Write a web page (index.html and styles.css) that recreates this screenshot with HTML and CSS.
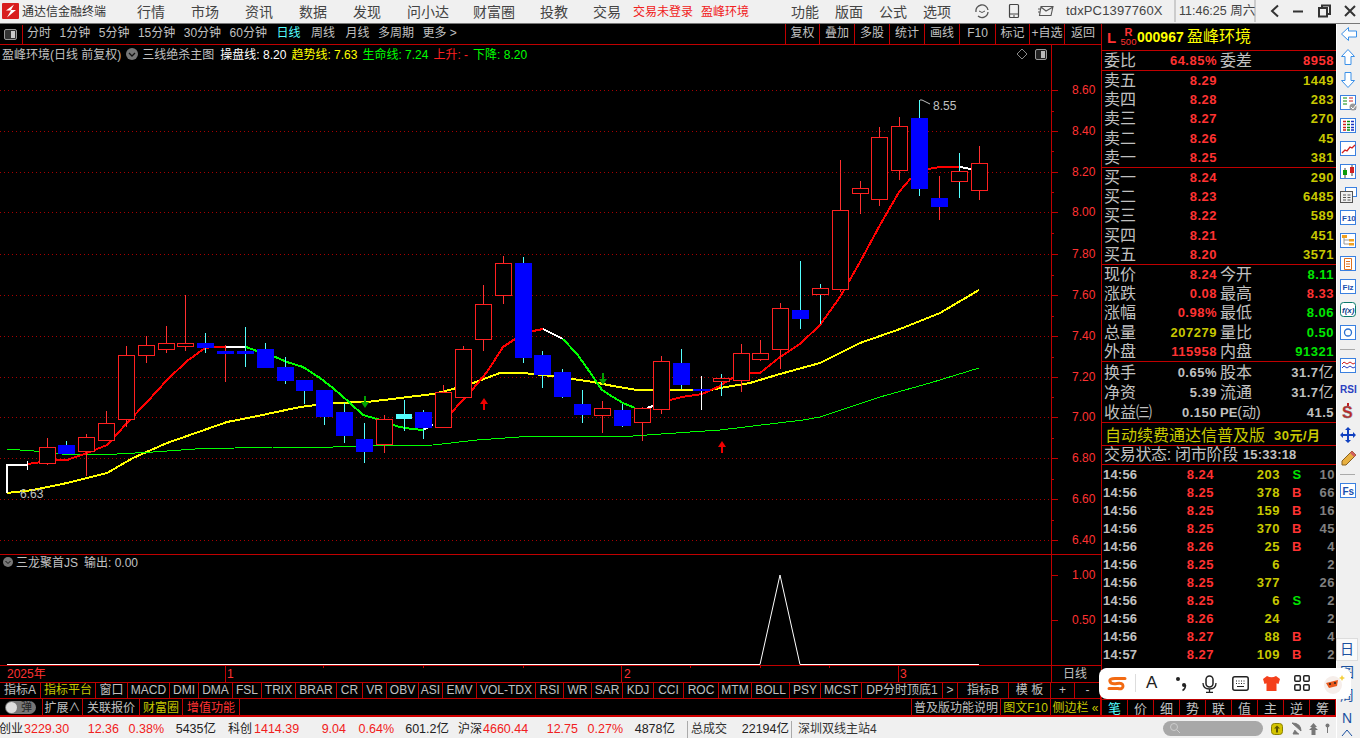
FILE: index.html
```html
<!DOCTYPE html>
<html lang="zh">
<head>
<meta charset="utf-8">
<title>通达信金融终端</title>
<link rel="stylesheet" href="styles.css">
</head>
<body>
<header class="titlebar">
  <svg class="logo" width="17" height="16" viewBox="0 0 17 16"><rect width="17" height="16" rx="1" fill="#d81e1e"/><path d="M12 1.500 4 7.500h5L5 14.500 14 7H9z" fill="#fff"/></svg>
  <span class="appname">通达信金融终端</span>
  <nav class="menu">
    <span>行情</span><span>市场</span><span>资讯</span><span>数据</span><span>发现</span><span>问小达</span><span class="m-wide">财富圈</span><span class="m-wide">投教</span><span>交易</span>
  </nav>
  <span class="alert a1">交易未登录</span><span class="alert a2">盈峰环境</span>
  <nav class="menu menu2"><span>功能</span><span>版面</span><span>公式</span><span>选项</span></nav>
  <svg class="ti t1" width="16" height="16" viewBox="0 0 16 16"><path d="M2 9A6 6 0 0 1 14 7M14 9A6 6 0 0 1 4 13" fill="none" stroke="#555" stroke-width="1.300"/><path d="M5 8q3 3 6 0" fill="none" stroke="#555"/></svg>
  <svg class="ti t2" width="12" height="16" viewBox="0 0 12 16"><rect x="1.500" y="1.500" width="9" height="13" rx="1" fill="none" stroke="#444" stroke-width="1.200"/><path d="M2 11h8M5 13h2" stroke="#444"/></svg>
  <svg class="ti t3" width="16" height="12" viewBox="0 0 16 12"><path d="M3 1.500h12l-2 9H1.500zM3 2l5 4 7-4M0 4h3M0 7h2" fill="none" stroke="#555" stroke-width="1.100"/></svg>
  <span class="uid">tdxPC1397760X</span>
  <span class="clock">11:46:25 周六</span>
  <span class="winbtns">
    <svg width="10" height="14" viewBox="0 0 10 14"><path d="M8 1.500 2 7l6 5.500" fill="none" stroke="#333" stroke-width="2"/></svg>
    <svg width="10" height="14" viewBox="0 0 10 14"><path d="M0 7.500h10" stroke="#333" stroke-width="2"/></svg>
    <svg width="13" height="14" viewBox="0 0 13 14"><path d="M1 4h8v8.500H1zM4 4V1.500h8V10H9" fill="none" stroke="#333" stroke-width="2"/></svg>
    <svg width="12" height="14" viewBox="0 0 12 14"><path d="M1 2l10 10M11 2 1 12" stroke="#333" stroke-width="2"/></svg>
  </span>
</header>

<div class="shell">
  <div class="workspace">
    <main class="terminal">
      <section class="left">
        <div class="toolbar">
          <svg class="panel-ic" width="13" height="11" viewBox="0 0 13 11"><rect x=".5" y=".5" width="12" height="10" rx="1.500" fill="#333" stroke="#999"/><rect x="7" y="2" width="4" height="7" fill="#ccc"/></svg>
          <div class="periods">
            <span>分时</span><span>1分钟</span><span>5分钟</span><span>15分钟</span><span>30分钟</span><span>60分钟</span><span class="cur">日线</span><span>周线</span><span>月线</span><span>多周期</span><span>更多 &gt;</span>
          </div>
          <div class="toolbtns">
            <span>复权</span><span>叠加</span><span>多股</span><span>统计</span><span>画线</span><span>F10</span><span>标记</span><span>+自选</span><span>返回</span>
          </div>
        </div>

        <div class="chart">
          <div class="legend">
            <span class="gray">盈峰环境(日线 前复权)</span>
            <svg class="chev" width="12" height="12" viewBox="0 0 12 12"><circle cx="6" cy="6" r="6" fill="#777"/><path d="M3 5l3 3 3-3" fill="none" stroke="#111" stroke-width="1.300"/></svg>
            <span class="gray l-name">三线绝杀主图</span>
            <span class="white">操盘线: 8.20</span>
            <span class="yellow">趋势线: 7.63</span>
            <span class="green">生命线: 7.24</span>
            <span class="red">上升: -</span>
            <span class="green">下降: 8.20</span>
          </div>
          <div class="legend legend2">
            <svg class="chev2" width="10" height="10" viewBox="0 0 10 10"><circle cx="5" cy="5" r="5" fill="#777"/><path d="M2.500 4l2.500 2.500L7.500 4" fill="none" stroke="#111"/></svg>
            <span class="gray">三龙聚首JS</span>
            <span class="gray">输出: 0.00</span>
          </div>
          <svg class="plot" width="1101" height="637" viewBox="0 45 1101 637">
            <path class="grid" d="M0 90.500H1051M0 131.500H1051M0 172.500H1051M0 212.500H1051M0 254.500H1051M0 295.500H1051M0 336.500H1051M0 377.500H1051M0 417.500H1051M0 458.500H1051M0 499.500H1051M0 540.500H1051"/>
            <path class="frame" d="M1051.500 45V698M0 554.500H1101M0 665.500H1101M1051 90.500h7M1051 131.500h7M1051 172.500h7M1051 212.500h7M1051 254.500h7M1051 295.500h7M1051 336.500h7M1051 377.500h7M1051 417.500h7M1051 458.500h7M1051 499.500h7M1051 540.500h7M1051 111.500h3M1051 151.500h3M1051 192.500h3M1051 233.500h3M1051 275.500h3M1051 316.500h3M1051 357.500h3M1051 397.500h3M1051 438.500h3M1051 479.500h3M1051 520.500h3M1051 575.500h7M1051 620.500h7M225.500 666v16M621.500 666v16M898.500 666v16M323.500 665v3M423.500 665v3M523.500 665v3M690.500 665v3M760.500 665v3M829.500 665v3"/>

            <polyline class="ln yel" points="7,493 33,490 67,483 107,473 133,458 167,443 187,436 227,422 253,417 300,407 333,403 367,402 400,398 433,394 453,389 473,383 500,373 523,373 543,375 573,379 593,382 613,386 637,390 710,390 720,388 750,383 780,374 820,363 860,343 900,329 940,313 979,290"/>
            <polyline class="ln thin" points="7,449 47,452 62,454 117,454 153,452 195,449 235,448 273,447 333,447 373,446 433,445 477,440 533,436 633,436 690,432 720,430 803,420 820,417 880,397 930,383 979,368"/>
            <path class="ln wht" d="M7 493V465H27M226 347H246M423 430L433 425M543 329L563 339M647 408L653 406M960 167L971 169"/>
            <polyline class="ln rd" points="27,464 57,460 67,460 87,453 107,445 127,423 147,402 167,380 187,361 205,348 214,347 226,347"/>
            <polyline class="ln grn" points="246,347 257,351 273,356 287,362 303,367 320,378 333,388 350,403 363,415 377,419 393,425 400,427 412,429 423,430"/>
            <polyline class="ln rd" points="451,413 472,390 487,372 503,347 515,339 533,331 543,329"/>
            <polyline class="ln grn" points="563,339 577,354 587,368 602,390 613,397 623,403 635,408"/>
            <polyline class="ln rd" points="670,400 682,397 702,394 720,386 730,379 750,373 760,373 780,357 800,344 820,325 840,297 860,262 880,225 899,192 911,178"/>
            <polyline class="ln rd" points="928,169 940,167 960,167"/>

            <path class="wick-r" d="M47.500 438V465M86.500 434V476M106.500 411V440M126.500 346V427M146.500 336V363M166.500 326V353M185.500 295V351M225.500 345V382M384.500 415V453M443.500 385V392M463.500 346V349M483.500 285V351M503.500 256V304M602.500 401V433M642.500 407V441M661.500 356V414M741.500 344V392M760.500 340V361M780.500 303V369M840.500 160V292M860.500 181V214M879.500 127V206M899.500 117V180M939.500 176V220M979.500 146V200"/>
            <path class="wick-c" d="M66.500 441V454M205.500 333V353M245.500 327V367M265.500 343V350M285.500 357V384M304.500 380V404M324.500 390V425M344.500 403V443M364.500 423V463M404.500 400V431M423.500 410V439M523.500 257V363M542.500 351V388M562.500 369V398M582.500 390V423M622.500 404V427M681.500 349V389M721.500 374V396M800.500 261V329M820.500 284V324M919.500 100V196M959.500 153V198"/>
            <path class="wick-w" d="M27.500 461V470M701.500 376V410"/>

            <g class="up">
              <rect x="39.500" y="447.500" width="16" height="16"/><rect x="78.500" y="437.500" width="16" height="14"/><rect x="98.500" y="423.500" width="16" height="17"/><rect x="118.500" y="355.500" width="16" height="64"/><rect x="138.500" y="345.500" width="16" height="10"/><rect x="158.500" y="343.500" width="16" height="6"/><rect x="177.500" y="343.500" width="16" height="3"/><rect x="376.500" y="419.500" width="16" height="25"/><rect x="435.500" y="392.500" width="16" height="35"/><rect x="455.500" y="349.500" width="16" height="48"/><rect x="475.500" y="304.500" width="16" height="35"/><rect x="495.500" y="263.500" width="16" height="32"/><rect x="594.500" y="408.500" width="16" height="7"/><rect x="634.500" y="408.500" width="16" height="14"/><rect x="653.500" y="361.500" width="16" height="48"/><rect x="713.500" y="378.500" width="16" height="3"/><rect x="733.500" y="353.500" width="16" height="27"/><rect x="752.500" y="353.500" width="16" height="6"/><rect x="772.500" y="308.500" width="16" height="41"/><rect x="812.500" y="288.500" width="16" height="6"/><rect x="832.500" y="210.500" width="16" height="79"/><rect x="852.500" y="188.500" width="16" height="5"/><rect x="871.500" y="137.500" width="16" height="62"/><rect x="891.500" y="126.500" width="16" height="44"/><rect x="951.500" y="171.500" width="16" height="10"/><rect x="971.500" y="163.500" width="16" height="27"/>
            </g>
            <g class="down">
              <rect x="58" y="445" width="17" height="9"/><rect x="197" y="343" width="17" height="5"/><rect x="217" y="351" width="17" height="3"/><rect x="237" y="351" width="17" height="3"/><rect x="257" y="349" width="17" height="19"/><rect x="277" y="367" width="17" height="14"/><rect x="296" y="380" width="17" height="11"/><rect x="316" y="390" width="17" height="27"/><rect x="336" y="412" width="17" height="24"/><rect x="356" y="439" width="17" height="13"/><rect x="415" y="412" width="17" height="16"/><rect x="515" y="263" width="17" height="95"/><rect x="534" y="355" width="17" height="20"/><rect x="554" y="372" width="17" height="25"/><rect x="574" y="404" width="17" height="11"/><rect x="614" y="410" width="17" height="16"/><rect x="673" y="363" width="17" height="22"/><rect x="693" y="389" width="17" height="2"/><rect x="792" y="310" width="17" height="9"/><rect x="911" y="118" width="17" height="71"/><rect x="931" y="198" width="17" height="9"/>
            </g>
            <rect class="cy" x="396" y="414" width="16" height="5"/>

            <path class="ar-g" d="M364 396h2v6h3l-4 6-4-6h3zM602 373h2v6h3l-4 6-4-6h3z"/>
            <path class="ar-r" d="M483 410v-6h-3l4-6 4 6h-3v6zM721 453v-6h-3l4-6 4 6h-3v6z"/>

            <path class="flag" d="M920 100h2l8 4"/>
            <text class="t-gray" x="933" y="110">8.55</text>
            <text class="t-gray" x="20" y="498">6.63</text>

            <path class="pulse" d="M7 664.500H760L780 575L800 664.500H979"/>

            <path class="dia" d="M1022 49l5 5-5 5-5-5z"/>
            <rect class="pan" x="1035.500" y="49.500" width="11" height="10" rx="1.500"/>
            <rect class="pan2" x="1041" y="51" width="4" height="7"/>

            <g class="axis">
              <text x="1072" y="94">8.60</text><text x="1072" y="135">8.40</text><text x="1072" y="176">8.20</text><text x="1072" y="216">8.00</text><text x="1072" y="258">7.80</text><text x="1072" y="299">7.60</text><text x="1072" y="340">7.40</text><text x="1072" y="381">7.20</text><text x="1072" y="421">7.00</text><text x="1072" y="462">6.80</text><text x="1072" y="503">6.60</text><text x="1072" y="544">6.40</text><text x="1072" y="579">1.00</text><text x="1072" y="624">0.50</text>
              <text x="7" y="678">2025年</text><text x="227" y="678">1</text><text x="624" y="678">2</text><text x="900" y="678">3</text>
            </g>
            <text class="t-gray cjk" x="1063" y="678">日线</text>
          </svg>
        </div>

        <div class="tabs tabs1">
          <span>指标A</span><span class="olive">指标平台</span><span>窗口</span><span>MACD</span><span>DMI</span><span>DMA</span><span>FSL</span><span>TRIX</span><span>BRAR</span><span>CR</span><span>VR</span><span>OBV</span><span>ASI</span><span>EMV</span><span>VOL-TDX</span><span>RSI</span><span>WR</span><span>SAR</span><span>KDJ</span><span>CCI</span><span>ROC</span><span>MTM</span><span>BOLL</span><span>PSY</span><span>MCST</span><span>DP分时顶底1</span><span>&gt;</span><span>指标B</span><span>模 板</span><span>+</span><span>-</span>
        </div>
        <div class="tabs tabs2">
          <span class="tog-cell"><i class="toggle"><b></b>弹</i></span><span>扩展∧</span><span>关联报价</span><span class="olive">财富圈</span><span class="red-t">增值功能</span><span class="blank"></span><span>普及版功能说明</span><span class="olive">图文F10</span><span class="olive">侧边栏 «</span>
        </div>
      </section>

      <aside class="right">
        <div class="stock"><b class="l">L</b><span class="r5"><b>R</b><i>500</i></span><b class="code">000967</b><span class="sname">盈峰环境</span></div>
        <div class="q q-one"><span>委比</span><b class="r">64.85%</b><span>委差</span><b class="r">8958</b></div>
        <div class="block five">
          <div class="q"><span>卖五</span><b class="r">8.29</b><span></span><b class="o">1449</b></div>
          <div class="q"><span>卖四</span><b class="r">8.28</b><span></span><b class="o">283</b></div>
          <div class="q"><span>卖三</span><b class="r">8.27</b><span></span><b class="o">270</b></div>
          <div class="q"><span>卖二</span><b class="r">8.26</b><span></span><b class="o">45</b></div>
          <div class="q"><span>卖一</span><b class="r">8.25</b><span></span><b class="o">381</b></div>
        </div>
        <div class="block five">
          <div class="q"><span>买一</span><b class="r">8.24</b><span></span><b class="o">290</b></div>
          <div class="q"><span>买二</span><b class="r">8.23</b><span></span><b class="o">6485</b></div>
          <div class="q"><span>买三</span><b class="r">8.22</b><span></span><b class="o">589</b></div>
          <div class="q"><span>买四</span><b class="r">8.21</b><span></span><b class="o">451</b></div>
          <div class="q"><span>买五</span><b class="r">8.20</b><span></span><b class="o">3571</b></div>
        </div>
        <div class="block five">
          <div class="q"><span>现价</span><b class="r">8.24</b><span>今开</span><b class="g">8.11</b></div>
          <div class="q"><span>涨跌</span><b class="r">0.08</b><span>最高</span><b class="r">8.33</b></div>
          <div class="q"><span>涨幅</span><b class="r">0.98%</b><span>最低</span><b class="g">8.06</b></div>
          <div class="q"><span>总量</span><b class="o">207279</b><span>量比</span><b class="g">0.50</b></div>
          <div class="q"><span>外盘</span><b class="r">115958</b><span>内盘</span><b class="g">91321</b></div>
        </div>
        <div class="block three">
          <div class="q"><span>换手</span><b>0.65%</b><span>股本</span><b>31.7<em>亿</em></b></div>
          <div class="q"><span>净资</span><b>5.39</b><span>流通</span><b>31.7<em>亿</em></b></div>
          <div class="q"><span>收益㈢</span><b>0.150</b><span class="pe"><b>PE</b>(动)</span><b>41.5</b></div>
        </div>
        <div class="promo"><span>自动续费通达信普及版</span><b>30元/月</b></div>
        <div class="state"><span>交易状态: 闭市阶段</span><b>15:33:18</b></div>
        <div class="ticks">
          <div class="t"><b>14:56</b><b class="r">8.24</b><b class="o">203</b><b class="g c">S</b><b class="n">10</b></div>
          <div class="t"><b>14:56</b><b class="r">8.25</b><b class="o">378</b><b class="r c">B</b><b class="n">66</b></div>
          <div class="t"><b>14:56</b><b class="r">8.25</b><b class="o">159</b><b class="r c">B</b><b class="n">16</b></div>
          <div class="t"><b>14:56</b><b class="r">8.25</b><b class="o">370</b><b class="r c">B</b><b class="n">45</b></div>
          <div class="t"><b>14:56</b><b class="r">8.26</b><b class="o">25</b><b class="r c">B</b><b class="n">4</b></div>
          <div class="t"><b>14:56</b><b class="r">8.25</b><b class="o">6</b><b class="c"></b><b class="n">2</b></div>
          <div class="t"><b>14:56</b><b class="r">8.25</b><b class="o">377</b><b class="c"></b><b class="n">26</b></div>
          <div class="t"><b>14:56</b><b class="r">8.25</b><b class="o">6</b><b class="g c">S</b><b class="n">2</b></div>
          <div class="t"><b>14:56</b><b class="r">8.26</b><b class="o">24</b><b class="c"></b><b class="n">2</b></div>
          <div class="t"><b>14:56</b><b class="r">8.27</b><b class="o">88</b><b class="r c">B</b><b class="n">4</b></div>
          <div class="t"><b>14:57</b><b class="r">8.27</b><b class="o">109</b><b class="r c">B</b><b class="n">2</b></div>
          <div class="t"><b>15:00</b><b class="r">8.24</b><b class="m">1058</b><b class="c"></b><b class="n">143</b></div>
        </div>
        <div class="side-tabs"><span class="cy-t">笔</span><span>价</span><span>细</span><span>势</span><span>联</span><span>值</span><span>主</span><span>逆</span><span>筹</span></div>
      </aside>
    </main>

    <footer class="status">
      <div class="idx"><span>创业</span><em>3229.30</em><em class="ra">12.36</em><em class="ra">0.38%</em><span class="ra">5435亿</span></div>
      <div class="idx mid"><span>科创</span><em>1414.39</em><em class="ra">9.04</em><em class="ra">0.64%</em><span class="ra">601.2亿</span></div>
      <div class="idx"><span>沪深</span><em>4660.44</em><em class="ra">12.75</em><em class="ra">0.27%</em><span class="ra">4878亿</span></div>
      <div class="total"><span>总成交</span><span>22194亿</span></div>
      <div class="site">深圳双线主站4</div>
      <div class="searchbox"><svg width="12" height="12" viewBox="0 0 12 12"><circle cx="5" cy="5" r="3.500" fill="none" stroke="#ccc"/><path d="M8 8l3 3" stroke="#ccc"/></svg></div>
      <div class="tray">
        <svg width="12" height="12" viewBox="0 0 12 12"><rect x=".5" y=".5" width="11" height="11" rx="3" fill="#d4c400" stroke="#8a8000"/><path d="M6 2.500 3 5.500h2v4h2v-4h2z" fill="#5a5200"/></svg>
        <svg width="12" height="13" viewBox="0 0 12 13"><path d="M2 1q9 0 9 8zM5 8l-2 4h6" fill="#777" stroke="#777"/></svg>
        <svg width="9" height="12" viewBox="0 0 9 12"><path d="M4.500 0 8 4H6l3 3H6.500v5h-4V7H0l3-3H1z" fill="#777"/></svg>
        <svg width="5" height="11" viewBox="0 0 5 11"><circle cx="2.500" cy="2.500" r="2" fill="#777"/><path d="M2.500 4v6" stroke="#777"/></svg>
      </div>
    </footer>
  </div>

  <aside class="sidebar">
    <svg class="ic" viewBox="0 0 18 18"><polygon class="ol" points="1.500,9 8.500,2.500 8.500,6 16.500,6 16.500,12 8.500,12 8.500,15.500"/></svg>
    <svg class="ic" viewBox="0 0 18 18"><polygon class="ol" points="8,1.500 14.500,8.500 11,8.500 11,16.500 5,16.500 5,8.500 1.500,8.500"/></svg>
    <svg class="ic" viewBox="0 0 18 18"><polygon class="ol" points="8,16.500 14.500,9.500 11,9.500 11,1.500 5,1.500 5,9.500 1.500,9.500"/></svg>
    <svg class="ic" viewBox="0 0 18 18"><rect class="bx" x=".5" y="1.500" width="15" height="14"/><path d="M3 4h4M3 7h4M3 10h4" stroke="#0a8a0a"/><path d="M9 4h4M9 7h4" stroke="#d02020"/><circle cx="13" cy="13" r="3.500" fill="#999"/><path d="M11 13l2 2 3-4" fill="none" stroke="#fff"/></svg>
    <svg class="ic" viewBox="0 0 18 18"><rect class="bx" x=".5" y="1.500" width="15" height="14"/><path d="M3 4.500h3M3 7.500h3M3 10.500h3M3 13h3" stroke="#d02020" stroke-width="1.500"/><path d="M7 4.500h3M7 7.500h3M7 10.500h3M7 13h3" stroke="#0a8a0a" stroke-width="1.500"/><path d="M11 4.500h3M11 7.500h3M11 10.500h3M11 13h3" stroke="#1a30c0" stroke-width="1.500"/></svg>
    <svg class="ic" viewBox="0 0 18 18"><rect class="bx" x=".5" y="1.500" width="15" height="14"/><path d="M2 13l3-3 2 1 3-4 2 1 3-3" fill="none" stroke="#d02020" stroke-width="1.300"/></svg>
    <svg class="ic" viewBox="0 0 18 18"><rect class="bx" x=".5" y="1.500" width="15" height="14"/><path d="M5 5v10M12 2v11" stroke="#444"/><rect x="3" y="7" width="4" height="5" fill="#0a9a0a"/><rect x="10" y="4" width="4" height="6" fill="#d02020"/></svg>
    <svg class="ic" viewBox="0 0 18 18"><rect class="bx" x="5.500" y="1.500" width="11" height="9"/><rect x=".5" y="5.500" width="12" height="11" fill="#f0f0f0" stroke="#555"/><path d="M3 9h3M3 11.500h3M3 14h3M7.500 9h3M7.500 11.500h3M7.500 14h3" stroke="#555"/></svg>
    <svg class="ic" viewBox="0 0 18 18"><rect class="bx" x=".5" y="1.500" width="15" height="14"/><text class="ic-t sm" x="2" y="12">F10</text></svg>
    <svg class="ic" viewBox="0 0 18 18"><rect class="bx" x=".5" y="1.500" width="15" height="14"/><path d="M4 5v7h5M4 8h5" fill="none" stroke="#999"/><rect x="2" y="3" width="5" height="3" fill="#f0a020"/><rect x="9" y="7" width="5" height="2.500" fill="#f0a020"/><rect x="9" y="11" width="5" height="2.500" fill="#f0a020"/></svg>
    <svg class="ic" viewBox="0 0 18 18"><rect class="bx" x=".5" y="1.500" width="15" height="14"/><path d="M4.500 3.500h7v11h-7z" fill="#fff" stroke="#e07020"/><path d="M6 6.500h4M6 9h4M6 11.500h4" stroke="#e07020"/></svg>
    <svg class="ic" viewBox="0 0 18 18"><rect class="bx" x=".5" y="1.500" width="15" height="14"/><text class="ic-t sm" x="2.500" y="12">Fiz</text></svg>
    <svg class="ic" viewBox="0 0 18 18"><rect x=".5" y="1.500" width="15" height="14" rx="3" fill="#fff" stroke="#0a7a6a"/><text class="ic-t fx" x="2" y="12">f(x)</text></svg>
    <svg class="ic" viewBox="0 0 18 18"><rect class="bx" x=".5" y="1.500" width="15" height="14"/><circle cx="8" cy="8.500" r="3.500" fill="none" stroke="#2a70d0" stroke-width="1.300"/></svg>
    <i class="rule"></i>
    <svg class="ic" viewBox="0 0 18 18"><rect class="bx" x=".5" y="1.500" width="15" height="14"/><path d="M2 7l2-2 3 2 3-2 3 2 2-1" fill="none" stroke="#d02020"/><path d="M2 11l2-2 3 2 3-2 3 2 2-1" fill="none" stroke="#2a40c0"/></svg>
    <svg class="ic" viewBox="0 0 18 18"><text class="ic-rsi" x="0" y="13">RSI</text></svg>
    <svg class="ic" viewBox="0 0 18 18"><text class="ic-s" x="2" y="15">S</text><path d="M8 0v3" stroke="#c02020" stroke-width="2"/></svg>
    <svg class="ic" viewBox="0 0 18 18"><path d="M8 1l3 3H9v4h4V6l3 3-3 3v-2H9v4h2l-3 3-3-3h2v-4H3v2L0 9l3-3v2h4V4H5z" fill="#1040c0"/></svg>
    <svg class="ic" viewBox="0 0 18 18"><path d="M12 2l4 4L6 16H2v-4z" fill="#e8b040" stroke="#886020"/><path d="M12 2l4 4-2 2-4-4z" fill="#d06060"/></svg>
    <i class="rule"></i>
    <svg class="ic" viewBox="0 0 18 18"><rect class="bx" x=".5" y="1.500" width="15" height="14"/><text class="ic-t" x="2.500" y="12.500">Fs</text></svg>
    <div class="pages">
      <span class="sel">日</span><span>图</span><span>周</span><span>N</span>
      <svg width="12" height="6" viewBox="0 0 12 6"><path d="M6 0 1 6M6 0l5 6" fill="none" stroke="#1a50a0"/></svg>
    </div>
  </aside>
</div>

<div class="ime">
  <svg class="ime-s" width="20" height="15" viewBox="0 0 20 15"><path d="M18 2.500H8Q2 2.500 3 5.500T10 7.500 16 10 11 12.500H2" fill="none" stroke="#f26a12" stroke-width="3" stroke-linecap="round"/></svg>
  <i class="ime-sep"></i>
  <span class="ime-a">A</span>
  <svg class="ime-p" width="12" height="16" viewBox="0 0 12 16"><circle cx="3" cy="3" r="2" fill="#222"/><circle cx="9" cy="9" r="2" fill="#222"/><path d="M10.500 9q0 4-3 5.500" fill="none" stroke="#222" stroke-width="1.500"/></svg>
  <svg class="ime-m" width="15" height="18" viewBox="0 0 15 18"><rect x="4" y="1" width="7" height="11" rx="3.500" fill="none" stroke="#222" stroke-width="1.500"/><path d="M1 8q0 6 6.500 6T14 8M7.500 14v3M4 17.300h7" fill="none" stroke="#222" stroke-width="1.300"/></svg>
  <svg class="ime-k" width="17" height="15" viewBox="0 0 17 15"><rect x=".8" y=".8" width="15.400" height="13.400" rx="2" fill="none" stroke="#222" stroke-width="1.500"/><path d="M4 5h1M6.500 5h1M9 5h1M11.500 5h1M4 7.500h1M6.500 7.500h1M9 7.500h1M11.500 7.500h1M5 10.500h7" stroke="#222"/></svg>
  <svg class="ime-c" width="17" height="15" viewBox="0 0 17 15"><path d="M0 3 4 0q4.500 2.500 9 0l4 3-1.500 5-2-.7V15H3.500V7.300l-2 .7z" fill="#f4401c"/></svg>
  <svg class="ime-g" width="16" height="16" viewBox="0 0 16 16"><g fill="none" stroke="#222" stroke-width="1.500"><rect x=".8" y=".8" width="5.500" height="5.500" rx="1"/><rect x="9.700" y=".8" width="5.500" height="5.500" rx="1"/><rect x=".8" y="9.700" width="5.500" height="5.500" rx="1"/><rect x="9.700" y="9.700" width="5.500" height="5.500" rx="1"/></g></svg>
  <svg class="ime-f" width="22" height="20" viewBox="0 0 22 20"><circle cx="10" cy="11" r="9" fill="#f6eeea"/><path d="M3 9l12-3-1 6-8 2z" fill="#e8581c"/><circle cx="7" cy="10" r="1" fill="#222"/><circle cx="12" cy="9" r="1" fill="#222"/><path d="M19 1l1 2 2 1-2 1-1 2-1-2-2-1 2-1z" fill="#f4d040"/></svg>
</div>
</body>
</html>
```

FILE: styles.css
```css
* { box-sizing: border-box; margin: 0; padding: 0; }
html, body { width: 1360px; height: 738px; overflow: hidden; }
body {
  position: relative;
  font-family: "Liberation Sans", "Noto Sans CJK SC", sans-serif;
  font-size: 12px;
  background: #f0f0f0;
  display: flex;
  flex-direction: column;
}
em, i { font-style: normal; }

/* title bar */
.titlebar {
  height: 24px;
  flex: none;
  display: flex;
  align-items: center;
  padding-bottom: 2px;
  background: #f0f0f0;
  border-bottom: 1px solid #777;
  color: #404040;
  white-space: nowrap;
}
.logo { margin-left: 2px; flex: none; }
.appname { margin-left: 3px; width: 85px; font-size: 12px; color: #333; }
.menu { display: flex; margin-left: 30px; font-size: 14px; color: #444; }
.menu span { margin-right: 26px; }
.menu .m-wide { margin-right: 25px; }
.menu span:nth-child(6) { margin-right: 24px; }
.menu span:nth-child(7) { margin-right: 25px; }
.menu span:last-child { margin-right: 0; }
.alert { color: #f02020; font-size: 12px; }
.a1 { margin-left: 12px; width: 60px; }
.a2 { margin-left: 8px; width: 48px; }
.menu2 { margin-left: 42px; }
.menu2 span { margin-right: 16px; }
.ti { flex: none; }
.t1 { margin-left: 23px; }
.t2 { margin-left: 18px; }
.t3 { margin-left: 18px; }
.uid { margin-left: 12px; width: 90px; font-size: 13px; color: #444; letter-spacing: .15px; }
.clock {
  margin-left: 18px;
  width: 82px;
  height: 22px;
  line-height: 22px;
  padding-left: 3px;
  font-size: 12.500px;
  color: #444;
  border-left: 2px solid #ccc;
  border-right: 2px solid #ccc;
}
.winbtns { display: flex; align-items: center; margin-left: 14px; }
.winbtns svg:nth-child(2) { margin-left: 13px; }
.winbtns svg:nth-child(3) { margin-left: 15px; }
.winbtns svg:nth-child(4) { margin-left: 13px; }

/* shell */
.shell { flex: 1; min-height: 0; display: flex; }
.workspace { width: 1336px; flex: none; display: flex; flex-direction: column; }
.terminal { height: 693px; flex: none; display: flex; background: #000; border-bottom: 2px solid #d00000; }
.left { width: 1101px; flex: none; display: flex; flex-direction: column; }

/* toolbar */
.toolbar {
  height: 21px;
  flex: none;
  display: flex;
  align-items: center;
  border-bottom: 1px solid #c00000;
  color: #c0c0c0;
  padding-left: 4px;
  line-height: 17px;
}
.panel-ic { flex: none; margin-right: 5px; }
.periods {
  height: 19px;
  display: flex;
  align-items: center;
  gap: 8.500px;
  border-left: 1px solid #c00000;
  padding-left: 4px;
  white-space: nowrap;
}
.periods .cur { color: #54ffff; margin-left: 1px; margin-right: 2px; }
.periods span:nth-child(8) { margin-right: 2px; }
.periods span { position: relative; top: -1px; }
.toolbtns {
  margin-left: auto;
  height: 20px;
  display: grid;
  grid-template-columns: 34px 35px 35px 35px 35px 36px 34px 35px 37px;
}
.toolbtns span {
  border-left: 1px solid #c00000;
  text-align: center;
  line-height: 18px;
  white-space: nowrap;
  overflow: hidden;
}

/* chart */
.chart { position: relative; height: 637px; flex: none; }
.plot { display: block; }
.legend {
  position: absolute;
  left: 2px;
  top: -1px;
  height: 18px;
  display: flex;
  align-items: center;
  gap: 5px;
  white-space: nowrap;
}
.legend .chev { margin: 2px -1px 0 0; }
.legend .l-name { margin-right: 1px; }
.legend2 { left: 3px; top: 507px; gap: 3px; }
.legend2 .chev2 { margin-top: 2px; }
.legend2 span:last-child { margin-left: 3px; }
.gray { color: #c0c0c0; }
.white { color: #fff; }
.yellow { color: #ff0; }
.green { color: #0f0; }
.red { color: #ff2020; }

.grid { stroke: #a80000; stroke-width: 1; stroke-dasharray: 1 3; fill: none; }
.frame { stroke: #c00000; stroke-width: 1; fill: none; }
.ln { fill: none; stroke-linejoin: round; shape-rendering: crispEdges; }
.yel { stroke: #ff0; stroke-width: 2; }
.thin { stroke: #0f0; stroke-width: 1; }
.wht { stroke: #fff; stroke-width: 2; }
.rd { stroke: #f00; stroke-width: 2; }
.grn { stroke: #0f0; stroke-width: 2; }
.wick-r { stroke: #ff3030; fill: none; shape-rendering: crispEdges; }
.wick-c { stroke: #54ffff; fill: none; shape-rendering: crispEdges; }
.wick-w { stroke: #fff; fill: none; shape-rendering: crispEdges; }
.up rect { fill: #000; stroke: #ff2020; shape-rendering: crispEdges; }
.down rect { fill: #00f; shape-rendering: crispEdges; }
.cy { fill: #54ffff; }
.ar-g { fill: #00a000; }
.ar-r { fill: #f00000; }
.flag { fill: none; stroke: #c0c0c0; }
.pulse { fill: none; stroke: #fff; stroke-width: 1; }
.dia { fill: none; stroke: #888; }
.pan { fill: #222; stroke: #999; }
.pan2 { fill: #bbb; }
.axis text { fill: #ff3232; font-size: 12px; font-family: "Liberation Sans", "Noto Sans CJK SC", sans-serif; }
.t-gray { fill: #c0c0c0; font-size: 12px; font-family: "Liberation Sans", "Noto Sans CJK SC", sans-serif; }

/* tabs */
.tabs { display: grid; flex: none; color: #c0c0c0; white-space: nowrap; }
.tabs span { display: block; text-align: center; overflow: hidden; border-right: 1px solid #c00000; }
.tabs1 {
  height: 17px;
  line-height: 15px;
  border-top: 1px solid #c00000;
  border-bottom: 1px solid #c00000;
  grid-template-columns: 41px 55px 32px 42px 29px 34px 29px 34px 41px 26px 24px 32px 24px 34px 59px 28px 28px 31px 31px 30px 35px 33px 38px 31px 41px 81px 15px 51px 42px 24px 26px;
}
.tabs2 {
  height: 17px;
  line-height: 18px;
  grid-template-columns: 43px 40px 57px 43px 57px 672px 89px 50px 50px;
}
.olive { color: #c8c800; }
.red-t { color: #ff3232; }
.tog-cell { position: relative; }
.toggle {
  position: absolute;
  left: 5px;
  top: 2px;
  width: 31px;
  height: 13px;
  line-height: 13px;
  border-radius: 7px;
  background: #777;
  color: #222;
  font-size: 11px;
  text-align: right;
  padding-right: 4px;
}
.toggle b {
  position: absolute;
  left: 1px;
  top: 1px;
  width: 11px;
  height: 11px;
  border-radius: 50%;
  background: #ddd;
}

/* right panel */
.right {
  width: 235px;
  flex: none;
  display: flex;
  flex-direction: column;
  border-left: 1px solid #c00000;
  color: #c0c0c0;
  overflow: hidden;
}
.stock {
  height: 27px;
  flex: none;
  display: flex;
  align-items: center;
  border-bottom: 1px solid #c00000;
  padding-left: 5px;
  color: #ff0;
}
.stock .l { color: #ff3232; font-size: 15px; width: 14px; }
.r5 { width: 15px; display: flex; flex-direction: column; align-items: center; color: #ff3232; line-height: 10px; }
.r5 b { font-size: 11px; }
.r5 i { font-size: 9.500px; }
.code { font-size: 14px; margin-left: 1px; width: 50px; }
.sname { font-size: 16px; line-height: 20px; }

.q {
  display: grid;
  grid-template-columns: 58px 55px 58px 1fr;
  align-items: center;
  padding: 0 2px 0 2px;
  font-size: 16px;
  line-height: 19px;
  white-space: nowrap;
  min-height: 0;
}
.q > b, .t > b, .state b, .promo b { font-size: 13px; letter-spacing: .5px; }
.q > b { text-align: right; }
.q > span:nth-child(3) { padding-left: 3px; }
.q em { font-size: 15px; font-weight: normal; margin-left: 0; }
.q-one { height: 20px; flex: none; border-bottom: 1px solid #c00000; }
.block { flex: none; display: grid; grid-auto-rows: 1fr; border-bottom: 1px solid #c00000; }
.five { height: 97px; }
.three { height: 61px; }
.q .r, .t .r { color: #ff3232; }
.q .o, .t .o, .promo b { color: #c8c800; }
.q .g, .t .g { color: #00e600; }
.pe b { font-size: 13px; }
.pe { font-size: 14px; }
.promo {
  height: 23px;
  flex: none;
  display: flex;
  align-items: center;
  padding-left: 3px;
  font-size: 16px;
  color: #c8c800;
  border-bottom: 1px solid #c00000;
  white-space: nowrap;
}
.promo b { margin-left: 9px; }
.state {
  height: 19px;
  flex: none;
  display: flex;
  align-items: center;
  padding-left: 2px;
  font-size: 16px;
  line-height: 18px;
  border-bottom: 1px solid #c00000;
  white-space: nowrap;
}
.state span { letter-spacing: -.3px; }
.state b { margin-left: 5px; letter-spacing: .2px; }
.ticks { height: 234px; flex: none; overflow: hidden; }
.t {
  height: 18px;
  display: grid;
  grid-template-columns: 51px 60px 66px 34px 1fr;
  align-items: center;
  padding: 0 1px 0 1px;
  color: #c0c0c0;
}
.t > b { text-align: right; }
.t > b:first-child { text-align: left; letter-spacing: .2px; }
.t .c { text-align: center; }
.t .n { color: #808080; }
.t .m { color: #ff00ff; }
.side-tabs {
  height: 17px;
  flex: none;
  border-top: 1px solid #c00000;
  display: grid;
  grid-template-columns: repeat(8, 26px) 1fr;
  font-size: 13px;
  line-height: 17px;
  text-align: center;
}
.side-tabs span { border-right: 1px solid #c00000; overflow: hidden; }
.cy-t { color: #54ffff; }

/* status bar */
.status {
  flex: 1;
  display: flex;
  align-items: center;
  padding-top: 4px;
  background: #f0f0f0;
  color: #222;
  white-space: nowrap;
  font-size: 12.500px;
}
.idx {
  display: grid;
  grid-template-columns: 25px 45px 50px 45px 52px;
  align-items: center;
  line-height: 17px;
  margin-right: 12px;
}
.idx.mid { grid-template-columns: 26px 45px 47px 48px 55px; margin-right: 9px; }
.idx:first-child { margin-left: -1px; }
.idx span:first-child { font-size: 12px; }
.status em { color: #f02020; }
.ra { text-align: right; }
.total {
  width: 105px;
  display: flex;
  justify-content: space-between;
  padding: 0 2px 0 3px;
  height: 17px;
  line-height: 17px;
  border-left: 1px solid #aaa;
  border-right: 1px solid #aaa;
}
.total span:first-child { font-size: 12px; color: #333; }
.site { margin-left: 6px; width: 364px; font-size: 12px; color: #333; line-height: 17px; }
.searchbox {
  position: absolute;
  left: 1163px;
  top: 721px;
  width: 100px;
  height: 15px;
  border-radius: 8px;
  background: #a8a8a8;
  padding: 1px 0 0 6px;
}
.searchbox svg { display: block; }
.tray {
  position: absolute;
  left: 1271px;
  top: 722px;
  display: flex;
  align-items: center;
  gap: 7px;
}
.tray svg { display: block; }

/* sidebar */
.sidebar {
  width: 24px;
  flex: none;
  display: flex;
  flex-direction: column;
  align-items: flex-start;
  gap: 5px;
  padding: 1px 0 0 3px;
  border-left: 1px solid #fff;
  background: #f0f0f0;
  overflow: hidden;
}
.ic { width: 18px; height: 18px; flex: none; }
.ol { fill: #fff; stroke: #3a90e8; stroke-width: 1; }
.bx { fill: #fff; stroke: #3a80e0; stroke-width: 1; }
.ic-t { font-family: "Liberation Sans", sans-serif; font-size: 10px; fill: #1a50b0; font-weight: bold; }
.ic-t.sm { font-size: 8px; }
.ic-t.fx { fill: #0a3a8a; font-style: italic; font-size: 8px; }
.ic-rsi { font-family: "Liberation Sans", sans-serif; font-size: 10px; font-weight: bold; fill: #2a40c0; }
.ic-s { font-family: "Liberation Sans", sans-serif; font-size: 16px; font-weight: bold; fill: #c02828; stroke: #777; stroke-width: .4px; }
.rule { width: 15px; height: 1px; background: #aaa; flex: none; margin: 2px 0; }
.pages {
  position: absolute;
  left: 1336px;
  top: 638px;
  width: 22px;
  display: flex;
  flex-direction: column;
  align-items: center;
  color: #1a50a0;
  font-size: 14px;
  line-height: 23px;
}
.pages span { display: block; width: 22px; text-align: center; }
.pages .sel { background: #fafafa; border: 1px solid #ddd; line-height: 21px; }

/* input method floating bar */
.ime {
  position: absolute;
  left: 1099px;
  top: 668px;
  width: 252px;
  height: 31px;
  background: #fff;
  border-radius: 8px;
  color: #222;
}
.ime > * { position: absolute; }
.ime-s { left: 8px; top: 8px; }
.ime-sep { left: 36px; top: 6px; width: 1px; height: 18px; background: #ddd; }
.ime-a { left: 47px; top: 5px; font-size: 17px; line-height: 20px; font-family: "Liberation Sans", sans-serif; }
.ime-p { left: 76px; top: 8px; }
.ime-m { left: 103px; top: 7px; }
.ime-k { left: 133px; top: 8px; }
.ime-c { left: 164px; top: 8px; }
.ime-g { left: 195px; top: 7px; }
.ime-f { left: 224px; top: 6px; }
```
